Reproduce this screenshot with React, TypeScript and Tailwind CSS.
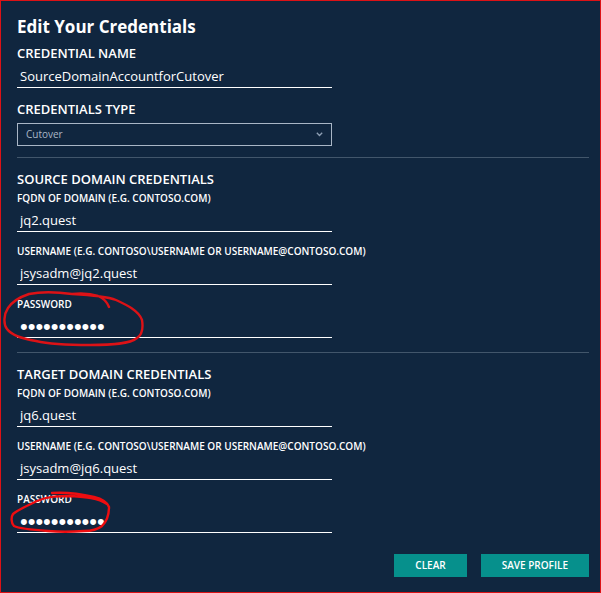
import { useState } from 'react';

type FieldProps = {
  id: string;
  label: string;
  defaultValue: string;
  type?: string;
  large?: boolean;
};

// Label with an underlined text box below it
const Field = ({ id, label, defaultValue, type = 'text', large = false }: FieldProps) => (
  <div className="flex flex-col">
    <label
      htmlFor={id}
      className={large ? 'text-[13px] leading-5 font-semibold' : 'text-[10px] leading-[18px] font-semibold'}
    >
      {label}
    </label>
    <input
      id={id}
      type={type}
      defaultValue={defaultValue}
      className={`h-[25px] w-[55%] border-b border-white bg-transparent px-[3px] pt-[2px] outline-none ${
        type === 'password' ? "font-['Liberation_Sans',sans-serif] text-[22px]" : 'text-[13px]'
      }`}
    />
  </div>
);

type DomainSectionProps = {
  id: string;
  title: string;
  domain: string;
  username: string;
};

const DomainSection = ({ id, title, domain, username }: DomainSectionProps) => (
  <section className="border-t border-[#42566b] pt-[11px]">
    <h2 className="text-[13px] leading-5 font-semibold">{title}</h2>
    <div className="flex flex-col gap-[10px]">
      <Field id={`${id}-domain`} label="FQDN OF DOMAIN (E.G. CONTOSO.COM)" defaultValue={domain} />
      <Field
        id={`${id}-username`}
        label="USERNAME (E.G. CONTOSO\USERNAME OR USERNAME@CONTOSO.COM)"
        defaultValue={username}
      />
      <div className="relative">
        <Field id={`${id}-password`} label="PASSWORD" type="password" defaultValue="password123" />
        {id === 'source' ? <SourceMark /> : <TargetMark />}
      </div>
    </div>
  </section>
);

// Hand-drawn rings around the password fields
const SourceMark = () => (
  <svg
    className="pointer-events-none absolute -top-[5px] -left-[17px]"
    width="150"
    height="60"
    viewBox="0 0 150 60"
    fill="none"
    stroke="#dc1216"
    strokeWidth="2.4"
    strokeLinecap="round"
    aria-hidden="true"
  >
    <path d="M109 17C107 12 103 8 98 6C92 4 82 3 72 4C57 2 39 2 29 4C20 7 12 12 8 18C4 24 3 34 7 39C12 46 24 49 36 51C53 55 73 55 90 55C112 55 130 54 137 48C143 44 143 36 142 30C139 21 127 15 116 10C106 6 91 5 72 4" />
  </svg>
);

const TargetMark = () => (
  <svg
    className="pointer-events-none absolute -top-[5px] -left-[17px]"
    width="120"
    height="54"
    viewBox="0 0 120 54"
    fill="none"
    stroke="#ee0d10"
    strokeWidth="2.4"
    strokeLinecap="round"
    aria-hidden="true"
  >
    <path d="M52 8C67 7 81 9 94 12C102 14 107 17 109 22C109 31 107 36 102 41C97 45 91 46 84 46C71 47 59 47 48 46C34 45 20 44 14 41C11 38 11 32 13 29C19 24 29 20 37 16C48 11 59 11 71 11C85 12 98 13 107 19" />
  </svg>
);

export default function EditCredentials() {
  const [type, setType] = useState('Cutover');

  return (
    <form
      className="border border-[#dc1216] bg-[#10263f] px-4 pt-[14px] pr-[11px] pb-[15px] font-['Open_Sans','Noto_Sans',sans-serif] text-white"
      onSubmit={e => e.preventDefault()}
    >
      <h1 className="mb-1 text-[17px] leading-6 font-bold">Edit Your Credentials</h1>
      <Field id="name" label="CREDENTIAL NAME" defaultValue="SourceDomainAccountforCutover" large />

      <div className="mt-[11px] flex flex-col gap-1">
        <label htmlFor="type" className="text-[13px] leading-5 font-semibold">
          CREDENTIALS TYPE
        </label>
        <div className="relative w-[55%]">
          <select
            id="type"
            value={type}
            onChange={e => setType(e.target.value)}
            className="block h-[23px] w-full appearance-none border border-[#a9b6c6] bg-transparent px-2 text-[10px] text-[#a9b6c6] outline-none"
          >
            <option>Cutover</option>
          </select>
          <svg
            className="pointer-events-none absolute top-[9px] right-[9px]"
            width="7"
            height="5"
            viewBox="0 0 7 5"
            fill="none"
            stroke="#8fa0b5"
            strokeWidth="1.3"
            aria-hidden="true"
          >
            <path d="M.8 .8l2.7 2.7L6.2 .8" />
          </svg>
        </div>
      </div>

      <div className="mt-[11px] flex flex-col gap-[14px]">
        <DomainSection id="source" title="SOURCE DOMAIN CREDENTIALS" domain="jq2.quest" username="jsysadm@jq2.quest" />
        <DomainSection id="target" title="TARGET DOMAIN CREDENTIALS" domain="jq6.quest" username="jsysadm@jq6.quest" />
      </div>

      <div className="mt-[21px] flex justify-end gap-[14px] text-[10px] font-semibold">
        <button type="reset" className="h-[23px] bg-[#06908c] px-[21px]">
          CLEAR
        </button>
        <button type="submit" className="h-[23px] bg-[#06908c] px-[21px]">
          SAVE PROFILE
        </button>
      </div>
    </form>
  );
}
